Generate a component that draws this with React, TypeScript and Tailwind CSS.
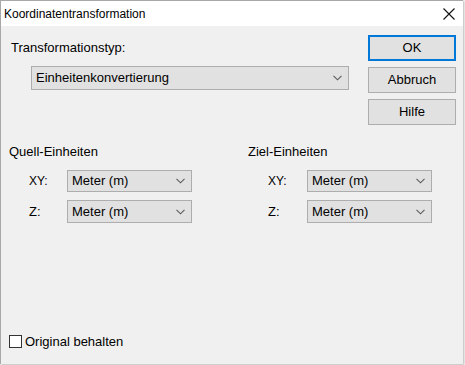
const font = { fontFamily: '"Liberation Sans", Arial, sans-serif' }

function Chevron() {
  return (
    <svg width="9" height="6" viewBox="0 0 9 6" className="shrink-0">
      <path d="M0.5 0.8 L4.5 4.8 L8.5 0.8" fill="none" stroke="#5a5a5a" strokeWidth="1.1" />
    </svg>
  )
}

function Select({ value, className }: { value: string; className: string }) {
  return (
    <div
      className={`flex items-center justify-between bg-[#e1e1e1] border border-[#adadad] pl-[4px] pr-[6px] text-[13px] text-black ${className}`}
    >
      <span>{value}</span>
      <Chevron />
    </div>
  )
}

function Button({ label, primary }: { label: string; primary?: boolean }) {
  return (
    <div
      className={`h-[26px] w-[88px] flex items-center justify-center bg-[#e1e1e1] text-[13px] text-black ${
        primary ? 'border-2 border-[#0078d7]' : 'border border-[#adadad]'
      }`}
    >
      {label}
    </div>
  )
}

function UnitGroup({ title, labelWidth }: { title: string; labelWidth: string }) {
  return (
    <div className="flex flex-col">
      <div className="text-[13px] leading-[15px] h-[15px]">{title}</div>
      <div className="flex items-center mt-[11px]">
        <span className={`pl-[20px] ${labelWidth} text-[12px]`}>XY:</span>
        <Select value="Meter (m)" className="w-[125px] h-[22px]" />
      </div>
      <div className="flex items-center mt-[8px]">
        <span className={`pl-[20px] ${labelWidth} text-[13px]`}>Z:</span>
        <Select value="Meter (m)" className="w-[125px] h-[23px]" />
      </div>
    </div>
  )
}

export default function App() {
  return (
    <div className="w-[465px] h-[365px] bg-[#f7f7f7] overflow-hidden" style={font}>
      <div className="w-[463px] h-[364px] flex flex-col border-l border-t border-[#a8a8a8] bg-[#f0f0f0] shadow-[1px_1px_2px_rgba(0,0,0,0.25)]">
        <div className="h-[25px] bg-white flex items-center justify-between pl-[3px] pr-[8px] shrink-0">
          <span className="text-[12px] text-black">Koordinatentransformation</span>
          <svg width="12" height="12" viewBox="0 0 12 12">
            <path d="M0.5 0.5 L11.5 11.5 M11.5 0.5 L0.5 11.5" stroke="#111" strokeWidth="1.1" />
          </svg>
        </div>
        <div className="flex-1 flex flex-col text-black">
          <div className="flex">
            <div className="flex-1 flex flex-col pt-[14px]">
              <div className="ml-[10px] text-[13px] leading-[15px]">Transformationstyp:</div>
              <Select value="Einheitenkonvertierung" className="ml-[30px] mt-[11px] w-[318px] h-[24px]" />
            </div>
            <div className="flex flex-col gap-[6px] pt-[9px] pr-[7px]">
              <Button label="OK" primary />
              <Button label="Abbruch" />
              <Button label="Hilfe" />
            </div>
          </div>
          <div className="flex mt-[19px]">
            <div className="ml-[8px] w-[239px]">
              <UnitGroup title="Quell-Einheiten" labelWidth="w-[58px]" />
            </div>
            <div>
              <UnitGroup title="Ziel-Einheiten" labelWidth="w-[59px]" />
            </div>
          </div>
          <div className="mt-auto mb-[13px] ml-[8px] flex items-center gap-[3px]">
            <div className="w-[13px] h-[13px] border border-[#333] bg-white" />
            <span className="text-[13px]">Original behalten</span>
          </div>
        </div>
      </div>
    </div>
  )
}
